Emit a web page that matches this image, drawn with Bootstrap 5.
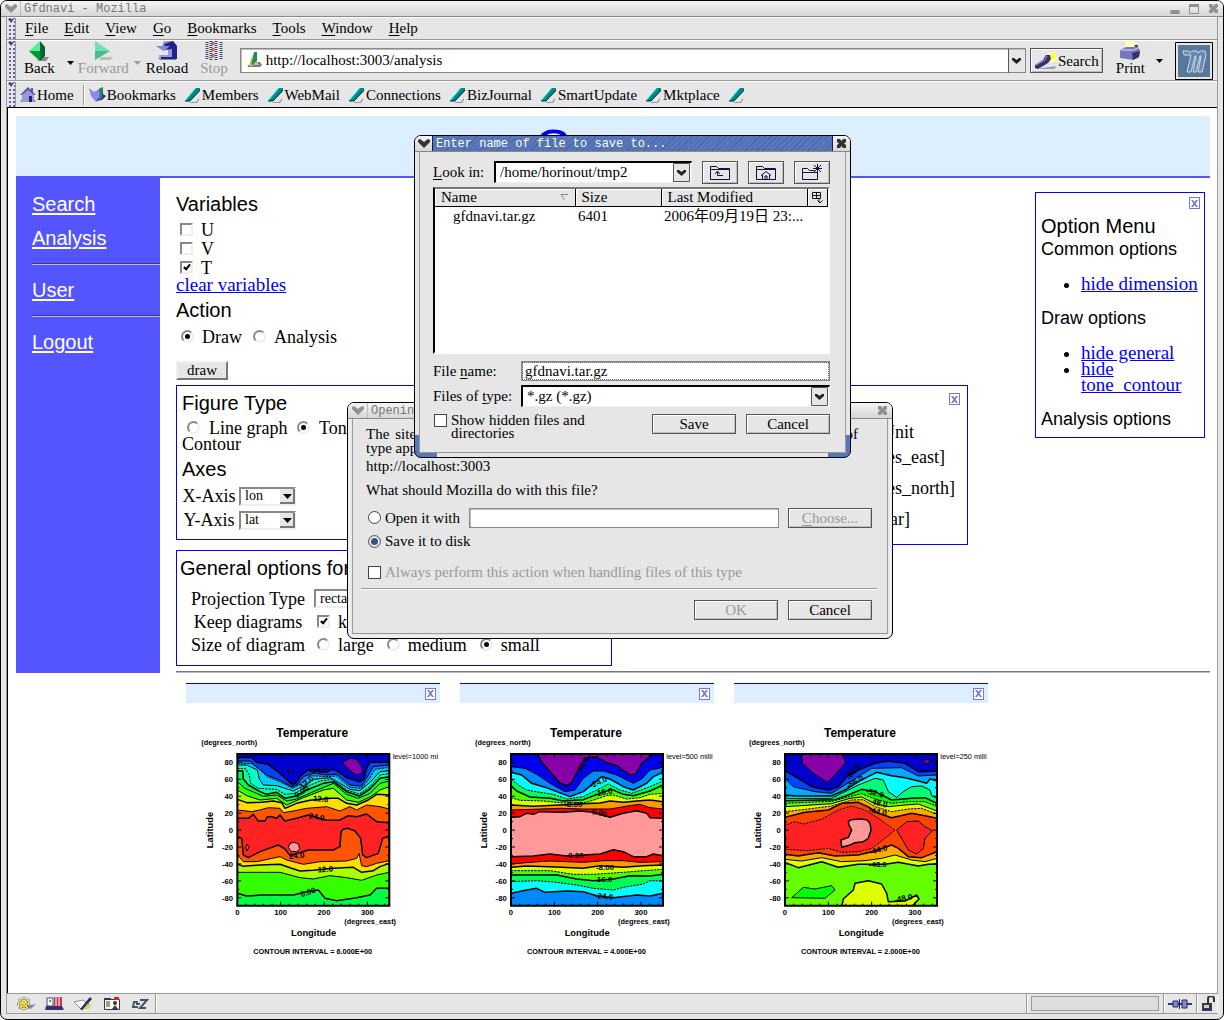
<!DOCTYPE html>
<html lang="en">
<head>
<meta charset="utf-8">
<meta name="viewport" content="width=device-width, initial-scale=1">
<title>Gfdnavi - Mozilla</title>
<link href="https://cdn.jsdelivr.net/npm/bootstrap@5.3.0/dist/css/bootstrap.min.css" rel="stylesheet">
<style>
:root{--face:#e6e6e6;--edge:#999;--serif:"Liberation Serif","Noto Sans CJK JP",serif;--sans:"Liberation Sans",sans-serif}
body{background:#fff;font:15px/16px var(--serif);color:#000}
button,input,select{font:inherit;color:inherit;border-radius:0;margin:0;padding:0}
.frame{background:var(--face);border:1px solid #000;border-radius:7px}
.shell{min-height:100vh}
.titlebar{height:16px;background:linear-gradient(#f4f4f4,#d6d6d6);border-bottom:1px solid #888;border-radius:6px 6px 0 0;font:12px/16px "Liberation Mono",monospace;color:#777}
.titlebar .knob{width:19px;height:15px;background:none;border:0;color:#909090;line-height:0}
.titlebar .cap{padding-left:3px;border-left:1px solid #bbb;height:15px}
.inner{margin:0 5px 5px;border:1px solid var(--edge);border-top:0}
.bar{border-bottom:1px solid var(--edge);border-top:1px solid #fff}
.grip{width:9px;border-right:1px solid var(--edge);background:radial-gradient(circle at 1px 1px,#66a 0 1px,transparent 1px) 2px 7px/4px 4px;position:relative}
.grip svg{position:absolute;left:1px;top:1px;background:var(--face)}
.menus div{height:21px;padding:2px 0 0 9px}
.menus a{color:#000;text-decoration:none;margin-right:16px}
u{text-underline-offset:2px}
.tool{background:none;border:0;display:flex;flex-direction:column;align-items:center;align-self:flex-start;line-height:14px}
.tool svg{display:block}
.dim{color:#999}
.sunk{background:#fff;border:1px solid #888;box-shadow:inset 1px 1px 0 #bbb}
.push{background:var(--face);border:1px solid #555;box-shadow:inset 1px 1px 0 #fff,inset -1px -1px 0 #bbb}
.push:disabled{color:#999}
.links a{color:#000;text-decoration:none;display:flex;align-items:center;gap:1px;margin-right:9px}
.view{background:#fff;border-left:1px solid #000;border-top:1px solid #000;padding:8px 7px 0 8px}
.banner{height:62px;background:#def;border-bottom:2px solid #55f}
.banner h1{font:38px/48px var(--sans);margin:7px 0 0;padding-right:18px;color:#00f}
.banner h1::first-letter{font-size:48px}
.side{width:144px;background:#55f;font:20px/24px var(--sans);padding:14px 0 0 16px}
.side a{display:block;color:#fff;margin-bottom:10px;text-underline-offset:2px}
.side hr{margin:13px 0;border:0;border-top:1px solid #33a;border-bottom:1px solid #bbf;opacity:1}
.main{padding-left:16px;font-size:18px;line-height:16px;min-width:0}
.main h2{font:20px/26px var(--sans);margin:0}
.main h3{font:18px/20px var(--sans);margin:0}
.main a{color:#00f}
.opt{height:19px;display:flex;align-items:center}
.tick,.dot{appearance:none;width:13px;height:13px;border:2px solid;border-color:#888 #eee #eee #888;background:#fff;position:relative;flex:none}
.tick:checked::after{content:"";position:absolute;left:3px;top:0;width:4px;height:7px;border:solid #000;border-width:0 2px 2px 0;transform:rotate(40deg)}
.dot{border-radius:50%}
.dot:checked::after{content:"";position:absolute;left:2px;top:2px;width:5px;height:5px;border-radius:50%;background:#000}
.flat{border:1px solid #444}
.flat.dot:checked{box-shadow:inset 0 0 0 1px #ccc;border-color:#555}
.flat.dot:checked::after{width:7px;height:7px;background:#358}
.blue{border:1px solid #00f;background:#fff}
.pick{position:relative;display:inline-flex}
.pick select{appearance:none;width:100%;height:19px;border:2px solid;border-color:#888 #eee #eee #888;background:#fff;padding-left:4px;font-size:14px;line-height:14px}
.pick svg{position:absolute;right:1px;top:2px;pointer-events:none}
.pick.big select{height:22px;border:1px solid #777;border-top:2px solid #000;border-left:2px solid #000;border-color:#000 #eee #eee #000;font-size:15px;line-height:19px}
.web-btn{width:52px;height:19px;font-size:15px;line-height:13px;background:var(--face);border:2px solid;border-color:#eee #777 #777 #eee}
.lab{width:126px;text-align:center}
.axis{width:54px;text-align:center}
.shut{width:11px;height:12px;padding:0;border:1px solid #77c;background:#fff;color:#77c;display:flex;align-items:center;justify-content:center}
.menu-box{width:170px;margin:14px 5px 0 0;height:246px}
.menu-box ul{margin:17px 0 16px;padding-left:40px}
.menu-box a{font-size:19px;line-height:16px;text-underline-offset:1px}
.units{font-size:18px}
.units td{height:31px}
.plots{padding:10px 0 0 170px;gap:20px;min-height:320px}
.plot{width:254px}
.plot header{height:20px;background:#def;border-top:1px solid #00f;display:flex;justify-content:flex-end;align-items:center;padding-right:4px}
.status{height:20px;border-top:1px solid var(--edge)}
.status>div{border-right:1px solid var(--edge);box-shadow:1px 0 0 #fff}
.dlg{position:absolute;box-shadow:inset 0 0 0 3px #eee}
.dlg .inner{margin:0 4px 4px}
.dlg-open{left:347px;top:402px;width:546px}
.dlg-save{left:414px;top:135px;width:437px;background:linear-gradient(#5577bb,#5577bb) 0 100%/22px 22px no-repeat,linear-gradient(#5577bb,#5577bb) 100% 100%/22px 22px no-repeat,var(--face);box-shadow:none}
.dlg-save .inner,.dlg-open .inner{background:var(--face)}
.dlg-save .titlebar{color:#fff}
.dlg-save .titlebar .cap{border-left:1px solid #124;border-right:1px solid #124;background:repeating-linear-gradient(135deg,#5878b8 0 3px,#4a69ac 3px 4px)}
.dlg-save .titlebar .knob{color:#333;width:17px}
.b84{width:84px;height:20px;line-height:16px}
.b36{width:36px;height:23px}
.files{height:167px;background:#fff;border:2px solid;border-color:#777 #fff #fff #000}
.files th{font-weight:400;background:var(--face);height:17px;padding:0 6px;border-right:1px solid #000;border-bottom:1px solid #000;box-shadow:inset 1px 1px #fff}
.files td{height:19px;padding:0 3px;white-space:nowrap}
.nav-row{height:39px}
.url{height:25px}.url input{outline:0;background:none;line-height:17px}
.search{width:73px;height:25px;margin:0 13px 0 4px}
.bm{height:25px}
.vr-line{width:2px;height:20px;background:var(--edge);border-right:1px solid #fff;margin-right:4px}
.forms h2:first-child{margin-top:13px}
.vars{padding:3px 0 0 4px}.vars .tick{margin-right:8px}
.clear{font-size:19px;height:16px}
.acts{padding:4px 0 0 5px;height:25px}.acts .opt{margin-right:11px}.acts .dot{margin-right:8px}
.web-btn{margin-top:13px}
.boxes{gap:10px;margin-top:5px}
.fig{width:240px;height:155px;padding:0 5px}
.forms .fig h2:first-child{margin-top:4px}
.kinds{margin-top:4px}.kinds .dot{margin:0 9px 0 5px}
.axrow{height:24px}.fig h2+.axrow{margin-top:2px}
.sel57{width:57px;margin-left:3px}.sel180{width:180px;margin-left:3px}
.dims{width:542px;height:160px;padding:7px 7px 0}
.units{margin:17px 4px 0 0;width:115px}.units th{height:19px}
.gen{width:436px;height:116px;margin-top:5px;padding:0 3px}
.forms .gen h2:first-child{margin-top:4px}
.genrow{height:23px;padding-left:5px}.genrow.first{margin-top:6px}
.genrow .opt{padding-left:6px;margin-right:7px}.genrow .tick,.genrow .dot{margin-right:8px}
.rule{margin:5px 0 0;border:0;border-top:1px solid #777;border-bottom:1px solid #bbb;opacity:1}
.menu-box{padding:4px 4px 0 5px}.menu-box h2{margin-top:4px}
.menu-box li{line-height:16px}
.stat-icons{width:149px;padding-left:8px;gap:7px}
.prog{width:128px;height:15px;background:#ddd;border:1px solid #999}
.open-body{padding:8px 15px 7px 13px;line-height:14px;height:215px}
.spread{text-align-last:justify;width:492px;white-space:nowrap}
.host{margin:3px 0 8px;line-height:16px}.ask{margin:0;line-height:16px}
.with{margin-top:9px;height:21px}.with .path{margin:0 9px;height:20px;min-width:0}
.open-body .flat{margin:0 4px 0 2px}
.disk{height:22px;margin-top:2px}.always{height:22px;margin-top:9px}
.open-body hr{margin:5px -5px 10px -5px;border:0;border-top:1px solid #999;border-bottom:1px solid #fff;opacity:1}
.acts2,.with .push{position:static}
.acts2{gap:10px}
.save-body{padding:8px 15px 0 13px;height:301px}
.look{height:24px}.look label{width:61px}.look .b36{margin-left:10px}.look .b36 svg{display:block;margin:auto}
.pick.big svg{right:2px;top:2px}
.files{margin-top:3px}
.files table{table-layout:fixed}.cn{width:140px}.cs{width:86px}.cp{width:20px}
.files td.fname{padding-left:18px}
.fl{width:88px}.fn{height:20px;padding-left:3px;outline:1px dotted #666;outline-offset:-2px;min-width:0}
.frow{margin-top:7px}.trow{margin-top:4px;height:22px}
.lastrow{margin-top:7px;gap:10px;line-height:13px}.hid .tick{margin:0 4px 0 1px}
</style>
</head>
<body>
<svg width="0" height="0" class="position-absolute" aria-hidden="true">
<defs>
<symbol id="x" viewBox="0 0 9 9"><path d="M1 1h2l1.500 2L6 1h2L5.500 4.500 8 8H6L4.500 6 3 8H1l2.500-3.500z" fill="currentColor"/></symbol>
<symbol id="vee" viewBox="0 0 12 9"><path d="M0 1l2-1 4 3 4-3 2 1v2L6 9 0 3z" fill="currentColor"/></symbol>
<symbol id="ex" viewBox="0 0 11 11"><path d="M1 1h3l1.500 2L7 1h3v3L8 5.500 10 7v3H7L5.500 8 4 10H1V7l2-1.500L1 4z" fill="currentColor"/></symbol>
<symbol id="pen" viewBox="0 0 16 16"><path d="M5 15h6l3-4v2l-2 3H5z" fill="#999"/><path d="M0 14L11 1h4v3L5 14z" fill="#088"/><path d="M0 14L11 1" stroke="#0dd"/><path d="M0 14h5L15 3" stroke="#033" fill="none"/></symbol>
<symbol id="gt" viewBox="0 0 6 4"><path d="M0 0h6L3 4z" fill="#448"/></symbol>
<symbol id="drop" viewBox="0 0 15 15"><path d="M0 0h15v15H0z" fill="#e6e6e6"/><path d="M14 0v14H0" fill="none" stroke="#777" stroke-width="2"/><path d="M3 5h9L7.500 10z"/></symbol>
<symbol id="drop2" viewBox="0 0 17 19"><path d="M.5.5h16v18H.5z" fill="#e6e6e6" stroke="#555"/><path d="M4 7l2 0 2.500 2L11 7h2v2l-4.500 4L4 9z" fill="#222"/></symbol>
</defs>
</svg>

<div class="shell frame d-flex flex-column">
  <div class="titlebar d-flex align-items-center">
    <button class="knob" aria-label="Window menu"><svg width="12" height="9"><use href="#vee"/></svg></button>
    <span class="cap flex-grow-1">Gfdnavi - Mozilla</span>
    <button class="knob" aria-label="Minimize"><svg width="11" height="10"><rect y="6" width="10" height="4" rx="2" fill="#909090"/></svg></button>
    <button class="knob" aria-label="Maximize"><svg width="11" height="10"><path d="M.5.5h9v9h-9z" fill="none" stroke="#909090"/><path d="M0 0h10v3H0z" fill="#909090"/></svg></button>
    <button class="knob" aria-label="Close"><svg width="11" height="11"><use href="#ex"/></svg></button>
  </div>
  <div class="inner d-flex flex-column flex-grow-1">
    <nav class="bar menus d-flex">
      <span class="grip"><svg width="6" height="4"><use href="#gt"/></svg></span>
      <div class="d-flex">
        <a href="#"><u>F</u>ile</a><a href="#"><u>E</u>dit</a><a href="#"><u>V</u>iew</a><a href="#"><u>G</u>o</a><a href="#"><u>B</u>ookmarks</a><a href="#"><u>T</u>ools</a><a href="#"><u>W</u>indow</a><a href="#"><u>H</u>elp</a>
      </div>
    </nav>
    <div class="bar d-flex">
      <span class="grip"><svg width="6" height="4"><use href="#gt"/></svg></span>
      <div class="nav-row d-flex align-items-center flex-grow-1 ps-2">
        <button class="tool"><svg width="20" height="20"><path d="M8 16h12l-3 4H9z" fill="#888"/><path d="M11 0L0 10l11 10z" fill="#5e9"/><path d="M11 0l5 6v9l-5 5z" fill="#063"/><path d="M0 10l11 10V10z" fill="#093"/></svg>Back</button>
        <svg class="ms-2 mt-1" width="15" height="4"><path d="M4 0h7L7.500 4z"/></svg>
        <button class="tool dim" disabled><svg width="20" height="20"><path d="M8 16h12l-3 3H6z" fill="#bbb"/><path d="M2 0l15 10L2 19z" fill="#5da" opacity=".8"/><path d="M17 10L2 19v-9z" fill="#3a6" opacity=".6"/></svg>Forward</button>
        <svg class="dim mt-1 mx-1" width="9" height="4"><path d="M1 0h7L4.500 4z" fill="#999"/></svg>
        <button class="tool"><svg width="22" height="20"><path d="M2 17h18v2H4z" fill="#888"/><path d="M8 0h9l4 5v13H3v-4h9V7L8 10 0 5h6z" fill="#99d"/><path d="M17 0l4 5v13H5v-2h11V8L9 9 8 3z" fill="#228"/><path d="M0 5h8l6 0-6 5z" fill="#88c"/></svg>Reload</button>
        <button class="tool dim ms-2 px-1" disabled><svg width="20" height="20"><path d="M3 1v18M7 0v20M12 0v20M17 1v18" stroke="#446" stroke-width="3" stroke-dasharray="1 1"/><path d="M9 1v18" stroke="#c66" stroke-width="3" stroke-dasharray="3 3"/></svg>Stop</button>
        <div class="sunk url d-flex align-items-center ms-2 flex-grow-1">
          <svg class="ms-1" width="17" height="17"><path d="M3 15h12l2-2-2-3H2z" fill="#77b"/><path d="M5 2L1 13h4L9 4z" fill="#ffe"/><path d="M7 3L4 14h4zM10 7l4 6H9z" fill="#cc3"/><path d="M9 0h3v9L6 13z" fill="#286"/></svg>
          <input class="border-0 flex-grow-1 ms-1" aria-label="Address" value="http://localhost:3003/analysis">
          <svg width="17" height="24"><path d="M.5 0v24" stroke="#555"/><path d="M1 1h16v22H1z" fill="#e6e6e6"/><path d="M4 9h2l2.500 2L11 9h2v2l-4.500 4L4 11z" fill="#222"/></svg>
        </div>
        <button class="push search d-flex align-items-center justify-content-center"><svg width="24" height="20"><path d="M13 2l8-2 2 9-6 3z" fill="#ff9"/><path d="M16 5l5-3-2 6z" fill="#ff0"/><path d="M8 17l15-2-3 3H5z" fill="#99b"/><path d="M1 14l8-5 3-5h4l1 4-3 4-10 6-3-1z" fill="#336"/><path d="M2 14l9-5 2-4" stroke="#99e" fill="none"/></svg>Search</button>
        <button class="tool"><svg width="24" height="20"><path d="M8 0h8l3 8H7z" fill="#ffb"/><path d="M16 4h4l-1 4z" fill="#336"/><path d="M2 9l6-3h12l2 4-1 6-6 3-13-2z" fill="#77b"/><path d="M14 12l8-2-1 6-6 3z" fill="#336"/><path d="M3 9h12l5-2" stroke="#ddf" fill="none"/></svg>Print</button>
        <svg class="mx-2" width="14" height="4"><path d="M3 0h7L6.500 4z"/></svg>
        <svg class="me-1" width="38" height="38"><path d="M.5.5h37v37H.5z" fill="#e6e6e6" stroke="#000"/><path d="M3 3h32v32H3z" fill="#57789c"/><path d="M8 9h6l1 2 2-2h5l1 2 2-2h5l1 4-4 17h-4l3-16h-1l-4 16h-3l3-16h-1l-4 16h-4l4-17H9z" fill="#68a" stroke="#cde"/></svg>
      </div>
    </div>
    <div class="bar links d-flex border-bottom-0">
      <span class="grip"><svg width="6" height="4"><use href="#gt"/></svg></span>
      <nav class="d-flex align-items-center ps-1 bm">
        <a href="#"><svg width="16" height="16"><path d="M0 15h16l-2-3H2z" fill="#4a6"/><path d="M2 8l6-6 6 6v7H2z" fill="#99d"/><path d="M8 0L0 8h2l6-5 6 5h2l-3-3V1h-2v2z" fill="#55a"/><path d="M9 9h3v6H9z" fill="#226"/></svg>Home</a>
        <span class="vr-line"></span>
        <a href="#"><svg width="17" height="16"><path d="M0 1l5 4 5-3 1 10-4 3-5-6z" fill="#88e"/><path d="M10 2l4-2v7l3 2-4 4-6 1 4-4z" fill="#338"/><path d="M11 1l3 0-1 10-3 2z" fill="#286"/></svg>Bookmarks</a>
        <a href="#"><svg width="16" height="16"><use href="#pen"/></svg>Members</a>
        <a href="#"><svg width="16" height="16"><use href="#pen"/></svg>WebMail</a>
        <a href="#"><svg width="16" height="16"><use href="#pen"/></svg>Connections</a>
        <a href="#"><svg width="16" height="16"><use href="#pen"/></svg>BizJournal</a>
        <a href="#"><svg width="16" height="16"><use href="#pen"/></svg>SmartUpdate</a>
        <a href="#"><svg width="16" height="16"><use href="#pen"/></svg>Mktplace</a>
        <a href="#" aria-label="Bookmark"><svg width="16" height="16"><use href="#pen"/></svg></a>
      </nav>
    </div>

    <div class="view flex-grow-1">
      <header class="banner text-center overflow-hidden"><h1>Gfdnavi</h1></header>
      <div class="d-flex">
        <nav class="side flex-shrink-0">
          <a href="#">Search</a><a href="#" class="mb-0">Analysis</a><hr><a href="#" class="mb-0">User</a><hr><a href="#">Logout</a>
        </nav>
        <main class="main flex-grow-1 d-flex flex-column">
          <div class="d-flex justify-content-between">
            <div class="forms">
              <h2>Variables</h2>
              <div class="vars">
                <label class="opt"><input type="checkbox" class="tick">U</label>
                <label class="opt"><input type="checkbox" class="tick">V</label>
                <label class="opt"><input type="checkbox" class="tick" checked>T</label>
              </div>
              <a class="d-block clear" href="#">clear variables</a>
              <h2 class="mt-1">Action</h2>
              <div class="d-flex acts">
                <label class="opt"><input type="radio" name="act" class="dot" checked>Draw</label>
                <label class="opt"><input type="radio" name="act" class="dot">Analysis</label>
              </div>
              <button class="web-btn d-block">draw</button>
              <div class="d-flex align-items-start boxes">
                <section class="blue fig">
                  <h2>Figure Type</h2>
                  <div class="kinds">
                    <label><input type="radio" name="fig" class="dot">Line graph</label>
                    <label><input type="radio" name="fig" class="dot" checked>Tone</label><br>Contour
                  </div>
                  <h2 class="mt-1">Axes</h2>
                  <div class="d-flex align-items-center axrow"><label class="axis" for="xa">X-Axis</label><span class="pick sel57"><select id="xa"><option>lon</option></select><svg width="15" height="15"><use href="#drop"/></svg></span></div>
                  <div class="d-flex align-items-center axrow"><label class="axis" for="ya">Y-Axis</label><span class="pick sel57"><select id="ya"><option>lat</option></select><svg width="15" height="15"><use href="#drop"/></svg></span></div>
                </section>
                <section class="blue dims d-flex flex-column align-items-end">
                  <button class="shut" aria-label="Close dimension"><svg width="9" height="9"><use href="#x"/></svg></button>
                  <table class="units"><tr><th class="fw-normal text-center">Unit</th></tr><tr><td>[degrees_east]</td></tr><tr><td>[degrees_north]</td></tr><tr><td>[millibar]</td></tr></table>
                </section>
              </div>
              <section class="blue gen">
                <h2>General options for draw</h2>
                <div class="d-flex align-items-center genrow first"><label class="lab" for="proj">Projection Type</label><span class="pick sel180"><select id="proj"><option>rectangular uniform</option></select><svg width="15" height="15"><use href="#drop"/></svg></span></div>
                <div class="d-flex align-items-center genrow"><span class="lab">Keep diagrams</span><label class="opt"><input type="checkbox" class="tick" checked>keep</label></div>
                <div class="d-flex align-items-center genrow"><span class="lab">Size of diagram</span><label class="opt"><input type="radio" name="sz" class="dot">large</label><label class="opt"><input type="radio" name="sz" class="dot">medium</label><label class="opt"><input type="radio" name="sz" class="dot" checked>small</label></div>
              </section>
            </div>
            <aside class="blue menu-box flex-shrink-0">
              <div class="d-flex justify-content-end"><button class="shut" aria-label="Close option menu"><svg width="9" height="9"><use href="#x"/></svg></button></div>
              <h2>Option Menu</h2>
              <h3>Common options</h3>
              <ul><li><a href="#">hide dimension</a></li></ul>
              <h3>Draw options</h3>
              <ul><li><a href="#">hide general</a></li><li><a href="#">hide tone_contour</a></li></ul>
              <h3>Analysis options</h3>
            </aside>
          </div>
          <hr class="rule">
        </main>
      </div>
      <div class="plots d-flex" id="plots"></div>
    </div>

    <footer class="status d-flex">
      <div class="d-flex align-items-center stat-icons">
        <svg width="22" height="14"><path d="M10 9l11-2-5 5z" fill="#88b"/><path d="M9 0v14M2 7h14M4 2l10 10M14 2L4 12" stroke="#553" stroke-width="3" stroke-dasharray="1 1"/><path d="M9 0v14M2 7h14M4 2l10 10M14 2L4 12" stroke="#fe4"/><circle cx="9" cy="7" r="3" fill="none" stroke="#dc3"/></svg>
        <svg width="22" height="14"><path d="M2 9h16l2 4H1z" fill="#336"/><path d="M3 1h6v8H3z" fill="#fff" stroke="#448"/><path d="M10 0h8v9h-8z" fill="#c35"/><path d="M12 0v9M15 0v9" stroke="#fff"/><path d="M5 3h2v2H5z" fill="#4a4"/></svg>
        <svg width="22" height="14"><path d="M1 5l9-2 6 4-7 6z" fill="#fff" stroke="#88a"/><path d="M7 12L17 0l2 2L9 13z" fill="#234"/><path d="M11 12l8-5-3 5z" fill="#dd0"/></svg>
        <svg width="22" height="14"><path d="M2.500 2.500h15v10h-15z" fill="#ffd" stroke="#335"/><path d="M2 1h7v2H2z" fill="#335"/><path d="M12 0h5v3h-5z" fill="#d22"/><path d="M4 5h4M4 7h4M4 9h4" stroke="#335"/><circle cx="13" cy="6" r="2" fill="#335"/><path d="M10 12l3-4 3 4z" fill="#335"/></svg>
        <svg width="18" height="14"><path d="M7 5H3L2 10h5M5 7h4M9 3h7l-7 8h6" fill="none" stroke="#456" stroke-width="2"/></svg>
      </div>
      <div class="flex-grow-1"></div>
      <div class="d-flex align-items-center px-1"><div class="prog"></div></div>
      <div class="d-flex align-items-center px-1"><svg width="24" height="12"><path d="M0 6h24" stroke="#338" stroke-width="2"/><path d="M5 3h5v6H5zM14 2h5v8h-5z" fill="#88c" stroke="#226"/><path d="M11.500 1v10" stroke="#226"/></svg></div>
      <div class="d-flex align-items-center ps-1 border-0"><svg width="16" height="16"><path d="M7 8V3a3 3 0 016 0v3" fill="none" stroke="#333" stroke-width="2"/><path d="M1 7h10v8H1z" fill="#336"/><path d="M3 9h5v3H3z" fill="#dd6"/></svg></div>
    </footer>
  </div>
</div>

<div class="dlg dlg-open frame" role="dialog" aria-label="Opening file">
  <div class="titlebar d-flex align-items-center">
    <button class="knob" aria-label="Window menu"><svg width="12" height="9"><use href="#vee"/></svg></button>
    <span class="cap flex-grow-1">Opening gfdnavi.tar.gz</span>
    <button class="knob" aria-label="Close"><svg width="11" height="11"><use href="#ex"/></svg></button>
  </div>
  <div class="inner open-body">
    <p class="m-0 spread">The site localhost has suggested that Mozilla should handle this file as one of</p>
    <p class="m-0">type application/x-gzip.</p>
    <p class="host">http://localhost:3003</p>
    <p class="ask">What should Mozilla do with this file?</p>
    <div class="d-flex align-items-center with"><label class="d-flex align-items-center"><input type="radio" name="how" class="dot flat">Open it with</label><input class="sunk flex-grow-1 path" aria-label="Application"><button class="push b84" disabled><u>C</u>hoose...</button></div>
    <label class="d-flex align-items-center disk"><input type="radio" name="how" class="dot flat" checked>Save it to disk</label>
    <label class="d-flex align-items-center always dim"><input type="checkbox" class="tick flat" disabled>Always perform this action when handling files of this type</label>
    <hr>
    <div class="d-flex justify-content-end acts2"><button class="push b84" disabled>OK</button><button class="push b84">Cancel</button></div>
  </div>
</div>

<div class="dlg dlg-save frame" role="dialog" aria-label="Enter name of file to save to">
  <div class="titlebar d-flex align-items-center">
    <button class="knob" aria-label="Window menu"><svg width="12" height="9"><use href="#vee"/></svg></button>
    <span class="cap flex-grow-1">Enter name of file to save to...</span>
    <button class="knob" aria-label="Close"><svg width="11" height="11"><use href="#ex"/></svg></button>
  </div>
  <div class="inner save-body">
    <div class="d-flex align-items-center look">
      <label for="look"><u>L</u>ook in:</label>
      <span class="pick big flex-grow-1"><select id="look"><option>/home/horinout/tmp2</option></select><svg width="17" height="19"><use href="#drop2"/></svg></span>
      <button class="push b36" aria-label="Up"><svg width="22" height="17"><path d="M1.500 15.500v-13h6l2 2h11v11z" fill="none" stroke="#113"/><path d="M1 5.500h19M14 11.500H8.500V8M6 10l2.500-3L11 10" fill="none" stroke="#113"/></svg></button>
      <button class="push b36" aria-label="Home"><svg width="22" height="17"><path d="M1.500 15.500v-13h6l2 2h11v11z" fill="none" stroke="#113"/><path d="M1 5.500h19M6 11.500l5-4 5 4M7.500 11v4.500M14.500 11v4.500M10 15v-3h2v3" fill="none" stroke="#113"/></svg></button>
      <button class="push b36" aria-label="New folder"><svg width="22" height="17"><path d="M1.500 15.500v-11h5l2 2h5M1 8.500h15M16.500 8v7.500h-15" fill="none" stroke="#113"/><path d="M16.500 0v9M12 4.500h9M13 1l7 7M20 1l-7 7" stroke="#113"/></svg></button>
    </div>
    <div class="files">
      <table class="w-100">
        <colgroup><col class="cn"><col class="cs"><col><col class="cp"></colgroup>
        <thead><tr><th><span class="d-flex justify-content-between align-items-center">Name<svg width="9" height="7"><path d="M8 .5H1L4.500 6" fill="none" stroke="#888"/></svg></span></th><th>Size</th><th>Last Modified</th><th class="p-0 text-center"><svg class="d-block mx-auto" width="11" height="11"><path d="M.5.5h8v6h-8zM0 3.500h9M4.500 0v6.500M7 6v4M5.500 8.500L8 11l2.500-2.500" fill="none" stroke="#111"/></svg></th></tr></thead>
        <tbody><tr><td class="fname">gfdnavi.tar.gz</td><td>6401</td><td colspan="2">2006年09月19日 23:...</td></tr></tbody>
      </table>
    </div>
    <div class="d-flex align-items-center frow"><label class="fl" for="fn">File <u>n</u>ame:</label><input id="fn" class="sunk flex-grow-1 fn" value="gfdnavi.tar.gz"></div>
    <div class="d-flex align-items-center trow"><label class="fl" for="ft">Files of <u>t</u>ype:</label><span class="pick big flex-grow-1"><select id="ft"><option>*.gz (*.gz)</option></select><svg width="17" height="19"><use href="#drop2"/></svg></span></div>
    <div class="d-flex lastrow"><label class="d-flex align-items-start flex-grow-1 hid"><input type="checkbox" class="tick flat"><span>Show hidden files and<br>directories</span></label><button class="push b84">Save</button><button class="push b84">Cancel</button></div>
  </div>
</div>

<script>
/* Contour bands, top to bottom: colour, upper boundary, line style (b bold, t thin, d dashed). */
const charts=[
{x0:172,ox:18,level:'level=1000 mi',step:'6.000E+00',base:'#0000cc',
 bands:[
 ['#0044ff','172,248 215,247 230,262 265,268 300,295 338,330 350,322 362,302 385,285 440,292 455,283 475,290 500,308 540,320 552,312 560,280 570,262 628,262','b'],
 ['#0088ff','172,258 210,258 235,280 260,300 300,315 335,335 352,330 370,305 400,294 440,300 470,297 510,330 545,333 565,300 580,275 628,270','t'],
 ['#00ccff','172,264 215,266 240,285 262,305 300,320 338,340 365,325 390,302 440,305 470,303 510,337 545,340 568,310 585,283 628,277','d'],
 ['#00ffcc','172,270 200,270 232,285 238,312 250,330 290,332 340,348 370,333 400,313 450,308 510,343 540,347 570,322 600,290 628,287','t'],
 ['#00ff99','172,280 197,281 208,300 212,325 235,340 290,343 315,358 345,355 375,338 420,318 455,313 500,345 538,357 570,335 600,300 628,295','d'],
 ['#00ff44','172,287 188,288 190,312 205,330 240,350 260,358 290,352 315,370 345,364 380,345 430,325 460,320 500,350 538,363 570,342 600,310 628,305','b'],
 ['#33ff00','172,320 195,340 250,364 290,360 320,378 350,372 400,350 460,325 500,358 535,370 570,355 600,325 628,318','t'],
 ['#aaff00','172,345 200,362 240,375 290,370 320,390 370,368 430,345 460,340 500,375 535,382 570,366 600,345 628,335','t'],
 ['#ffdd00','172,373 200,383 245,382 280,378 305,383 315,400 350,385 390,376 450,370 475,370 500,385 530,390 565,375 590,358 628,360','b'],
 ['#ff5500','172,405 215,410 240,405 265,398 300,400 310,413 340,408 380,400 440,395 480,408 510,395 530,405 560,390 600,395 628,402','t'],
 ['#ff2222','172,430 205,430 220,418 235,438 255,438 262,425 275,425 290,430 300,420 315,438 350,430 385,420 440,436 480,435 505,422 530,425 560,417 590,440 628,443','b'],
 ['#ff5500','172,485 185,490 190,540 205,548 240,530 295,510 315,522 330,542 385,525 460,525 480,515 483,470 490,462 505,460 525,468 542,490 548,540 560,548 595,535 608,490 628,483','b'],
 ['#ffdd00','172,540 190,560 230,560 300,545 320,555 370,568 420,560 500,558 530,550 537,535 545,572 560,575 590,565 628,557','t'],
 ['#aaff00','172,567 190,574 240,570 300,568 330,578 360,588 400,586 460,580 520,577 545,592 580,587 600,575 628,565','b'],
 ['#33ff00','172,592 300,592 360,608 400,612 450,602 500,608 545,616 590,600 628,592','t'],
 ['#00ff44','172,655 200,663 250,660 340,660 380,650 415,645 435,670 470,677 530,668 570,660 590,640 628,640','b']],
 blobs:[['#8800aa','488,262 510,250 530,252 545,275 548,295 530,300 510,288','t'],['#8800aa','322,288 332,284 339,288 331,292','t'],['#ff9999','325,517 330,505 343,502 356,508 359,522 350,530 333,529','t'],['#ff5500','197,517 202,507 207,517 201,528','t']],
 labels:[[415,295,'-24.0',0],[380,330,'12.0',-40],[365,358,'0.00',-35],[422,380,'12.0',5],[410,434,'24.0',10],[350,550,'24.0',-5],[436,591,'12.0',-3],[384,660,'0.00',-18]]},
{x0:183,ox:30,level:'level=500 milli',step:'4.000E+00',base:'#8800aa',
 bands:[
 ['#0000ee','183,237 262,237 275,262 300,290 330,325 352,332 365,322 385,285 400,258 415,247 440,247 475,265 500,272 540,300 558,297 575,265 605,240 639,237','b'],
 ['#0088ff','183,275 225,280 260,298 300,325 345,350 375,345 400,310 430,288 460,288 500,300 550,325 575,312 600,285 639,277','t'],
 ['#00ffff','183,292 215,300 245,325 280,335 320,350 360,365 400,350 430,325 455,305 480,312 520,335 550,345 590,325 610,305 639,292','b'],
 ['#00ff55','183,312 205,330 230,345 270,352 310,358 350,372 400,365 440,345 475,327 510,345 545,355 600,335 639,318','d'],
 ['#44ff00','183,332 200,348 240,366 300,370 340,378 400,374 450,355 485,343 520,358 550,362 600,348 639,330','b'],
 ['#ddff00','183,368 210,376 280,378 340,384 410,382 470,362 490,360 530,372 570,368 600,358 639,355','d'],
 ['#ff9900','183,390 250,394 330,390 400,386 450,384 480,378 520,382 560,378 600,375 639,380','b'],
 ['#ff0000','183,405 250,403 330,400 400,402 450,402 480,402 540,392 570,388 600,398 639,402','t'],
 ['#ff9999','183,427 210,425 230,415 250,418 270,410 340,412 390,408 430,412 480,427 520,415 560,407 590,415 600,428 639,430','b'],
 ['#ff0000','183,545 250,543 300,537 350,543 400,540 450,537 490,524 520,530 550,545 590,545 610,537 639,542','b'],
 ['#ff9900','183,567 240,562 300,558 400,562 460,557 520,557 570,562 639,560','t'],
 ['#ddff00','183,577 230,573 300,575 400,580 450,572 520,577 580,572 639,570','b'],
 ['#44ff00','183,587 300,587 370,598 430,598 520,592 580,587 639,583','d'],
 ['#00ff55','183,600 320,600 380,612 430,617 490,612 540,602 600,603 639,598','b'],
 ['#00ffff','183,620 260,617 320,622 380,630 430,640 490,645 520,637 580,627 600,617 639,618','d'],
 ['#0088ff','183,655 230,645 260,640 285,652 350,648 400,650 440,662 490,668 560,660 600,663 639,655','b']],
 blobs:[],labels:[[400,275,'32.0',-60],[445,330,'-24.0',-25],[460,360,'-16.0',-10],[370,396,'-8.00',0],[448,422,'0.00',12],[378,548,'0.00',0],[465,585,'-8.00',0],[460,621,'-16.0',0],[462,672,'-24.0',5]]},
{x0:180,ox:27,level:'level=250 milli',step:'2.000E+00',base:'#0000cc',
 bands:[
 ['#0044ff','180,287 220,310 260,335 310,345 340,335 365,305 400,285 450,265 490,258 540,265 580,290 636,288','b'],
 ['#00aaff','180,310 205,335 270,350 320,355 360,330 400,305 440,280 530,278 580,303 636,300','t'],
 ['#00ffff','180,360 210,363 320,363 360,345 400,320 455,292 500,302 540,308 580,318 605,325 615,312 636,318','b'],
 ['#00ff77','180,370 320,370 350,355 400,330 450,310 475,315 490,350 515,367 535,350 560,335 590,333 615,345 620,362 636,370','t'],
 ['#00ff00','180,377 330,374 370,360 410,343 450,350 500,375 560,370 600,368 636,385','b'],
 ['#66ff00','180,385 320,379 370,366 410,356 450,372 500,385 550,380 600,380 636,395','d'],
 ['#ddff00','180,395 320,386 375,370 410,366 450,386 490,395 540,390 580,387 636,408','t'],
 ['#ffaa00','180,410 250,402 320,393 380,375 415,374 450,395 500,410 550,402 590,400 636,418','d'],
 ['#ff4400','180,427 240,412 310,405 350,385 400,382 430,396 460,415 500,428 560,415 600,422 636,430','b'],
 ['#ffaa00','180,538 220,543 280,533 330,543 400,540 450,528 500,510 520,520 550,545 590,548 636,530','b'],
 ['#ddff00','180,553 230,558 290,548 350,560 420,557 470,550 510,540 560,555 600,560 636,550','t'],
 ['#66ff00','180,562 220,578 290,560 340,577 400,568 480,568 520,562 580,573 610,568 636,567','b']],
 blobs:[['#8800aa','230,237 232,265 265,295 308,322 330,300 362,262 350,237','t'],['#8800aa','594,259 603,253 617,256 612,264 600,265','t'],
 ['#ff2222','176,452 210,440 235,447 290,433 340,405 380,393 420,405 460,430 510,465 480,490 440,520 400,530 350,532 310,520 250,527 176,523','d'],
 ['#ff2222','515,465 545,440 580,438 600,455 622,467 600,490 595,520 575,537 550,525 530,490','t'],
 ['#ff9999','370,440 378,434 405,432 425,434 435,445 438,465 430,490 415,500 390,503 375,510 350,517 348,495 370,487 380,465 372,450','b'],
 ['#ddff00','350,695 355,672 385,645 390,625 430,617 470,627 485,655 490,680 540,678 575,660 582,672 560,695','b'],
 ['#00ff00','200,668 235,637 270,642 320,632 330,645 300,670','t']],
 labels:[[385,298,'-60.0',-50],[390,328,'-56.0',-30],[450,362,'-52.0',15],[460,392,'-48.0',15],[458,418,'-44.0',12],[460,533,'-44.0',-15],[458,575,'-48.0',0],[535,678,'-48.0',-12]]}];
const lineStyle={b:'stroke-width="4.500"',t:'stroke-width="3"',d:'stroke-width="3" stroke-dasharray="7 3"'};
const host=document.getElementById('plots');
charts.forEach((c,i)=>{
  const L=c.x0,R=L+456,t=(x,y,s,z,o='')=>`<text x="${x}" y="${y}" font-size="${z}" ${o}>${s}</text>`;
  let s=`<clipPath id="clip${i}"><path d="M${L} 237H${R}V692H${L}z"/></clipPath><g clip-path="url(#clip${i})" stroke="#000" stroke-linejoin="round"><path d="M${L} 237H${R}V692H${L}z" fill="${c.base}"/>`;
  c.bands.forEach(b=>s+=`<path d="M${b[1]} V720H${L-20}V${b[1].split(/[, ]/)[1]}z" fill="${b[0]}" ${lineStyle[b[2]]}/>`);
  c.blobs.forEach(b=>s+=`<path d="M${b[1]}z" fill="${b[0]}" ${lineStyle[b[2]]}/>`);
  s+='</g><g font-weight="700" text-anchor="middle">';
  c.labels.forEach(l=>s+=t(l[0],l[1],l[2],24,`transform="rotate(${l[3]} ${l[0]} ${l[1]-8})"`));
  s+='</g>';
  let d='';
  for(let k=0;k<17;k++){const y=262+k*25.4,n=k%2?6:12;d+=`M${L} ${y}h${n}M${R} ${y}h-${n}`}
  for(let k=0;k<18;k++){const x=L+k*26,n=k%5?6:12;d+=`M${x} 692v-${n}M${x} 237v${n}`}
  s+=`<path d="${d}" stroke="#000" stroke-width="3"/><path d="M${L} 237H${R}V692H${L}z" fill="none" stroke="#000" stroke-width="6"/>`;
  s+='<g font-weight="700">'+t(L+117,185,'Temperature',36)+t(L-108,210,'(degrees_north)',22)+t(L+321,748,'(degrees_east)',22)+t(L+161,784,'Longitude',28)+t(L+48,838,'CONTOUR INTERVAL = '+c.step,22);
  [80,60,40,20,0,-20,-40,-60,-80].forEach((v,k)=>s+=t(L-13,270+k*51,v,23,'text-anchor="end"'));
  [0,100,200,300].forEach((v,k)=>s+=t(L+k*130,721,v,23,'text-anchor="middle"'));
  s+=t(0,0,'Latitude',28,`text-anchor="middle" transform="translate(${L-73} 465) rotate(-90)"`)+'</g>'+t(L+466,252,c.level,22);
  host.insertAdjacentHTML('beforeend',`<figure class="plot m-0"><header><button class="shut" aria-label="Close diagram"><svg width="9" height="9"><use href="#x"/></svg></button></header><svg class="d-block" width="254" height="263" viewBox="${c.ox} 84 762 789" font-family="Liberation Sans, sans-serif">${s}</svg></figure>`);
});
</script>
<script src="https://cdn.jsdelivr.net/npm/bootstrap@5.3.0/dist/js/bootstrap.bundle.min.js"></script>
</body>
</html>
